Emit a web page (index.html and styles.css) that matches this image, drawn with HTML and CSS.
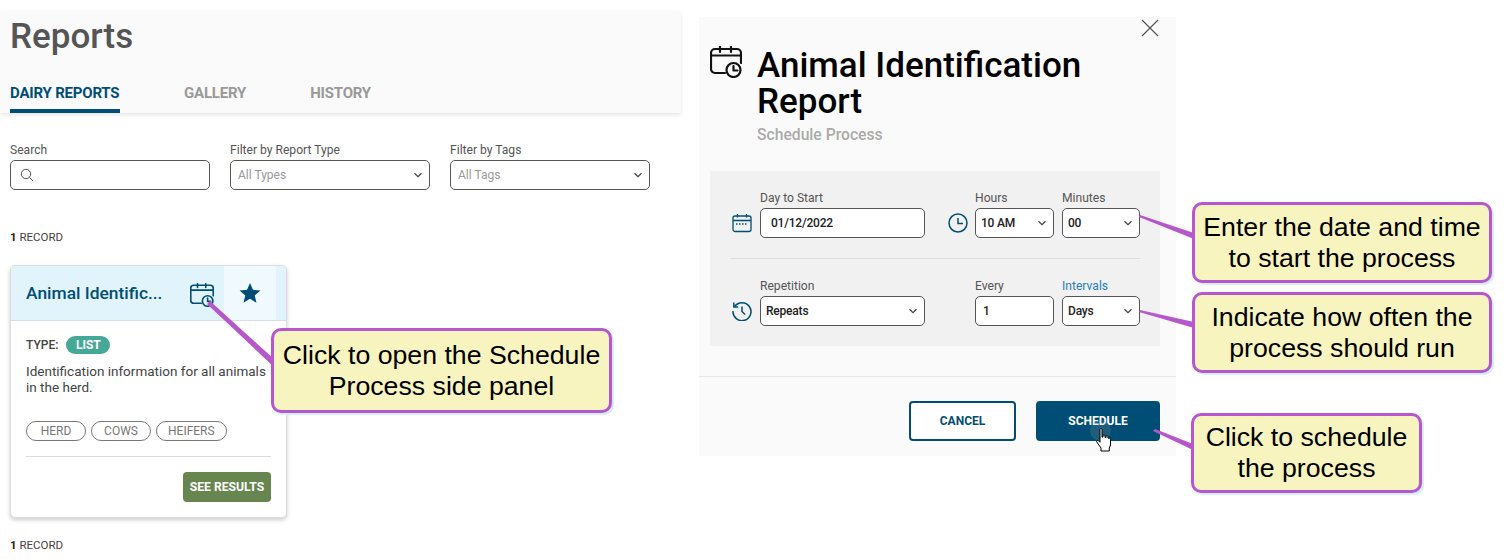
FILE: index.html
```html
<!DOCTYPE HTML>
<html>
<head>
<meta http-equiv="Content-Type" content="text/html; charset=utf-8">
<title>Reports</title>
<link rel="stylesheet" href="styles.css">
</head>
<body>
<svg class="defs" width="0" height="0">
	<symbol id="calclock" viewBox="0 0 32 32">
		<g fill="none" stroke="currentColor" stroke-width="2.2" stroke-linecap="round" stroke-linejoin="round">
			<path d="M15 27H5a4 4 0 0 1-4-4V7a4 4 0 0 1 4-4h22a4 4 0 0 1 4 4v10"/>
			<path d="M1 9.500H31M10 1V6M21 1V6"/>
			<circle cx="23.500" cy="24" r="7"/>
			<path d="M23.500 20v4.500h4"/>
		</g>
	</symbol>
	<symbol id="chev" viewBox="0 0 10 6">
		<path d="M1.500 1.200L5 4.600L8.500 1.200" fill="none" stroke="#444" stroke-width="1.300"/>
	</symbol>
</svg>

<div class="canvas">

	<!-- reports page -->
	<div class="reports">
		<div class="top">
			<h1>Reports</h1>
			<div class="tabs">
				<a class="tab on">DAIRY REPORTS</a>
				<a class="tab t2">GALLERY</a>
				<a class="tab t3">HISTORY</a>
			</div>
		</div>
		<div class="filters">
			<div class="field">
				<label>Search</label>
				<div class="box">
					<svg class="glass" width="14" height="14" viewBox="0 0 14 14"><circle cx="6" cy="6" r="4.700" fill="none" stroke="#555" stroke-width="1"/><path d="M9.500 9.500L13 13" stroke="#555" stroke-width="1"/></svg>
				</div>
			</div>
			<div class="field">
				<label>Filter by Report Type</label>
				<div class="box pick"><span class="ph">All Types</span><svg class="ch"><use href="#chev"/></svg></div>
			</div>
			<div class="field">
				<label>Filter by Tags</label>
				<div class="box pick"><span class="ph">All Tags</span><svg class="ch"><use href="#chev"/></svg></div>
			</div>
		</div>
		<p class="count"><b>1</b> RECORD</p>
		<div class="card">
			<div class="card-head">
				<span class="card-title">Animal Identific...</span>
				<svg class="card-cal"><use href="#calclock"/></svg>
				<span class="star-box">
					<svg width="22" height="22" viewBox="0 0 20 20"><path d="M10 .8l2.700 6.300 6.800.6-5.200 4.500 1.600 6.700L10 15.300l-5.900 3.600 1.600-6.700L.5 7.700l6.800-.6z" fill="#004e75"/></svg>
				</span>
			</div>
			<div class="card-body">
				<div class="type"><span class="type-name">TYPE:</span> <span class="pill">LIST</span></div>
				<p class="desc">Identification information for all animals in the herd.</p>
				<div class="tags">
					<span class="tag">HERD</span>
					<span class="tag">COWS</span>
					<span class="tag">HEIFERS</span>
				</div>
				<div class="card-foot">
					<a class="results">SEE RESULTS</a>
				</div>
			</div>
		</div>
		<p class="count count2"><b>1</b> RECORD</p>
	</div>

	<!-- side panel -->
	<div class="panel">
		<div class="close">
			<svg width="18" height="18" viewBox="0 0 18 18"><path d="M1 1L17 17M17 1L1 17" stroke="#555" stroke-width="1.200"/></svg>
		</div>
		<div class="panel-head">
			<svg class="panel-cal"><use href="#calclock"/></svg>
			<div>
				<h2>Animal Identification Report</h2>
				<p class="sub">Schedule Process</p>
			</div>
		</div>
		<div class="sched">
			<div class="row">
				<svg class="ico" width="20" height="20" viewBox="0 0 20 20"><g fill="none" stroke="#004e75" stroke-width="1.300"><rect x="1" y="3" width="18" height="15.500" rx="2"/><path d="M1 7.500H19M5.500 1V4.500M14.500 1V4.500"/><path d="M4 11H16" stroke-dasharray="1.500 1.500"/></g></svg>
				<div class="fld date"><label>Day to Start</label><div class="box val pad">01/12/2022</div></div>
				<svg class="ico ico2" width="20" height="20" viewBox="0 0 20 20"><g fill="none" stroke="#004e75" stroke-width="1.500"><circle cx="10" cy="10" r="9"/><path d="M10 5V10.500H15"/></g></svg>
				<div class="fld hrs"><label>Hours</label><div class="box val pick">10 AM<svg class="ch"><use href="#chev"/></svg></div></div>
				<div class="fld mins"><label>Minutes</label><div class="box val pick">00<svg class="ch"><use href="#chev"/></svg></div></div>
			</div>
			<div class="sep"></div>
			<div class="row">
				<svg class="ico" width="20" height="20" viewBox="0 0 20 20"><g fill="none" stroke="#004e75" stroke-width="1.500"><path d="M2.600 5.500A9 9 0 1 1 1 10"/><path d="M1.800 1.500V6H6.200"/><path d="M10 5.500V10.500L13 13.500"/></g></svg>
				<div class="fld date"><label>Repetition</label><div class="box val pick">Repeats<svg class="ch"><use href="#chev"/></svg></div></div>
				<span class="ico ico2"></span>
				<div class="fld hrs"><label>Every</label><div class="box val pick pad1">1</div></div>
				<div class="fld mins"><label class="blue">Intervals</label><div class="box val pick">Days<svg class="ch"><use href="#chev"/></svg></div></div>
			</div>
		</div>
		<div class="actions">
			<a class="btn cancel">CANCEL</a>
			<a class="btn go">SCHEDULE</a>
		</div>
	</div>

	<!-- annotation layer -->
	<svg class="leaders" width="1509" height="559" viewBox="0 0 1509 559">
		<g fill="#b658cc">
			<path d="M207 304L210 301L274 359L274 367z"/>
			<path d="M1139 217L1140 215L1194 233L1194 239z"/>
			<path d="M1139 312L1140 310L1194 322L1194 328z"/>
			<path d="M1153 431L1155 429L1193 444L1193 450z"/>
		</g>
	</svg>
	<span class="halo"></span>
	<svg class="hand" width="16" height="24" viewBox="0 0 16 24"><path d="M4 1.500c0-1.300 2-1.300 2 0V9l1 .1V7.800c0-1 2-1 2 0v1.500l1 .2V8.700c0-1 2-1 2 0v1.300l1 .3c.8-.3 1.500.2 1.500 1V17l-1.200 3v3H5v-3L.8 14c-.8-1.200.8-2.300 1.700-1.300L4 14.300z" fill="#fff" stroke="#000" stroke-width="1"/></svg>

	<div class="callout c1">Click to open the Schedule Process side panel</div>
	<div class="callout c2">Enter the date and time to start the process</div>
	<div class="callout c3">Indicate how often the process should run</div>
	<div class="callout c4">Click to schedule the process</div>

</div>
</body>
</html>
```

FILE: styles.css
```css
body{margin:0;padding:0;background:#fff;font-family:Roboto,"Liberation Sans",sans-serif;color:#333;}
h1,h2,p{margin:0;padding:0;}
.defs{position:absolute;}
.canvas{width:1509px;height:559px;position:relative;overflow:hidden;}

/* reports page */
.reports{position:absolute;left:0;top:11px;width:681px;}
.top{height:102px;background:#fafafa;box-shadow:0 2px 4px rgba(0,0,0,.1);padding-left:10px;box-sizing:border-box;display:flex;flex-direction:column;}
.top h1{font-size:35px;font-weight:500;line-height:42px;margin-top:5px;color:#555;letter-spacing:0;}
.tabs{display:flex;margin-top:auto;}
.tab{font-size:15px;font-weight:700;color:#999;height:37px;line-height:35px;box-sizing:border-box;letter-spacing:-.2px;}
.tab.on{color:#004e75;border-bottom:4px solid #004e75;border-radius:3px 3px 0 0;width:110px;white-space:nowrap;}
.t2{margin-left:64px;}
.t3{margin-left:64px;}

.filters{display:flex;gap:20px;padding:30px 0 0 10px;}
.field{width:200px;}
label{display:block;font-size:12.100px;line-height:15px;color:#555;}
.box{height:30px;border:1px solid #555;border-radius:5px;background:#fff;box-sizing:border-box;display:flex;align-items:center;margin-top:2px;}
.glass{margin-left:9px;}
.pick{padding:0 6px 0 7px;justify-content:space-between;}
.ph{font-size:12px;color:#999;margin-top:-1px;}
.ch{width:10px;height:6px;flex:none;}

.count{font-size:11.500px;line-height:14px;color:#444;padding:40px 0 0 10px;}
.count b{color:#222;}
.count2{padding-top:20px;}

.card{width:277px;height:253px;margin:21px 0 0 10px;box-sizing:border-box;border:1px solid #ddd;border-radius:5px;background:#fff;box-shadow:0 2px 4px rgba(0,0,0,.2);overflow:hidden;}
.card-head{height:54px;background:#e1f3fb;border-bottom:1px solid #d5dde2;display:flex;align-items:center;padding-left:15px;padding-right:10px;}
.card-title{font-size:17.400px;font-weight:500;color:#004e75;width:164px;white-space:nowrap;}
.card-cal{width:24px;height:24px;color:#004e75;margin-top:3px;}
.star-box{width:52px;height:100%;background:#f0f9fe;margin-left:10px;display:flex;align-items:center;justify-content:center;}
.card-body{padding:14px 15px 0;}
.type{font-size:12px;color:#444;display:flex;align-items:center;gap:8px;height:20px;}
.type-name{font-weight:500;}
.pill{background:#46a997;color:#fff;font-size:12px;font-weight:700;width:44px;height:18px;line-height:18px;text-align:center;border-radius:9px;}
.desc{font-size:13.500px;line-height:16px;color:#444;margin-top:8px;height:32px;width:245px;}
.tags{display:flex;gap:5px;margin-top:26px;padding-bottom:15px;border-bottom:1px solid #ddd;}
.tag{height:20px;line-height:19px;min-width:60px;border:1px solid #777;border-radius:10px;box-sizing:border-box;font-size:12px;color:#777;text-align:center;padding:0 11px;}
.card-foot{display:flex;justify-content:flex-end;padding-top:15px;}
.results{width:88px;height:30px;line-height:30px;background:#67854f;color:#fff;font-size:12.200px;font-weight:700;text-align:center;border-radius:4px;}

/* side panel */
.panel{position:absolute;left:699px;top:17px;width:477px;height:439px;background:#fafafa;box-sizing:border-box;}
.close{display:flex;justify-content:flex-end;padding:2px 17px 0 0;height:29px;box-sizing:border-box;}
.panel-head{display:flex;padding-left:11px;gap:15px;}
.panel-cal{width:32px;height:32px;color:#111;flex:none;}
.panel-head h2{font-size:35px;line-height:36px;font-weight:500;color:#000;width:350px;padding-top:2px;}
.sub{font-size:15.700px;font-weight:500;color:#aaa;line-height:20px;margin-top:5px;}
.sched{margin:26px 16px 0 11px;height:175px;background:#f1f1f1;padding:20px 20px 0;box-sizing:border-box;}
.row{display:flex;align-items:flex-end;}
.ico{width:20px;height:20px;flex:none;margin:0 8px 5px 2px;}
.ico2{margin:0 7px 5px 23px;}
.date{width:165px;flex:none;}
.hrs{width:79px;flex:none;margin-right:8px;}
.mins{width:78px;flex:none;}
.fld .box{font-size:12px;letter-spacing:-.2px;color:#222;font-weight:500;}
.fld .pick{padding-left:5px;}
.fld .pad{padding-left:10px;}
.fld .pad1{padding-left:7px;}
.blue{color:#2b7db8;}
.sep{height:1px;background:#ddd;margin:20px 0 20px;}
.actions{margin-top:30px;border-top:1px solid #e6e6e6;padding:24px 16px 0 0;display:flex;justify-content:flex-end;gap:20px;}
.btn{height:40px;line-height:36px;box-sizing:border-box;border-radius:4px;text-align:center;font-size:12px;font-weight:700;}
.cancel{width:107px;border:2px solid #004e75;color:#004e75;background:#fff;}
.go{width:124px;border:2px solid #004e75;background:#004e75;color:#fff;}

/* annotations */
.leaders{position:absolute;left:0;top:0;}
.halo{position:absolute;left:1090px;top:420px;width:21px;height:21px;border-radius:50%;background:rgba(160,160,160,.2);}
.hand{position:absolute;left:1096px;top:428px;}
.callout{position:absolute;box-sizing:border-box;border:3px solid #b658cc;border-radius:10px;background:#f7f4bf;box-shadow:2px 2px 1px #d5ecfb;font-family:"Liberation Sans",sans-serif;color:#000;font-size:26.700px;line-height:31px;text-align:center;display:flex;align-items:center;justify-content:center;}
.c1{left:271px;top:328px;width:341px;height:85px;padding:0 6px;}
.c2{left:1192px;top:202px;width:300px;height:81px;padding:0 3px;}
.c3{left:1192px;top:292px;width:300px;height:81px;padding:0 12px;}
.c4{left:1191px;top:413px;width:231px;height:80px;padding:0 10px;}
```
